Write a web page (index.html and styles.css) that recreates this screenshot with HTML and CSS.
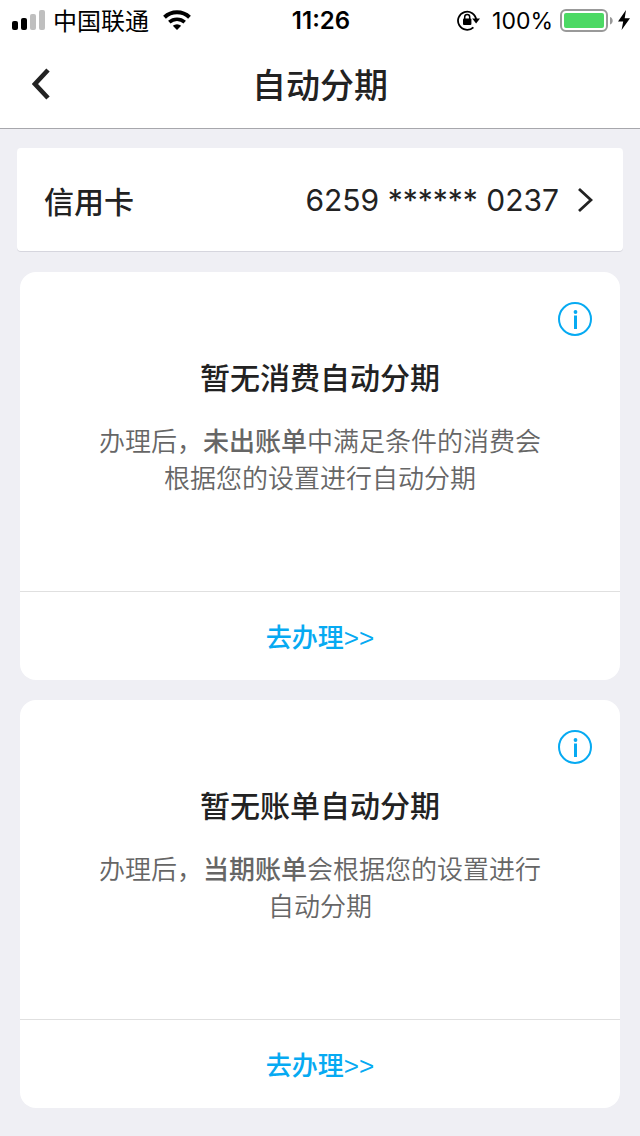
FILE: index.html
```html
<!DOCTYPE html>
<html lang="zh-CN">
<head>
    <meta charset="UTF-8">
    <meta name="viewport" content="width=device-width, initial-scale=1.0">
    <title>自动分期</title>
    <link rel="stylesheet" href="styles.css">
</head>
<body>
    <div class="status-bar">
        <div class="status-left">
            <svg class="signal" width="34" height="20" viewBox="0 0 34 20">
                <rect x="0" y="11" width="6" height="9" rx="2"/>
                <rect x="9" y="8" width="6" height="12" rx="2"/>
                <rect x="18" y="4" width="6" height="16" rx="2" fill="#bfbfbf"/>
                <rect x="27" y="0" width="6" height="20" rx="2" fill="#bfbfbf"/>
            </svg>
            <span class="carrier">中国联通</span>
            <svg class="wifi" width="28" height="20" viewBox="0 0 28 20">
                <path d="M1.5 7.2a18.2 18.2 0 0 1 25 0" fill="none" stroke="#000" stroke-width="4"/>
                <path d="M6.3 12.2a11.4 11.4 0 0 1 15.4 0" fill="none" stroke="#000" stroke-width="3.6"/>
                <path d="M14 20l-4.2-4.2a6.2 6.2 0 0 1 8.4 0z"/>
            </svg>
        </div>
        <span class="time">11:26</span>
        <div class="status-right">
            <svg class="lock" width="24" height="22" viewBox="0 0 24 22">
                <path d="M16.4 18.3A9.1 9.1 0 1 1 19.2 11" fill="none" stroke="#000" stroke-width="1.8"/>
                <path d="M15.2 9.6h7.8l-3.9 4.8z"/>
                <rect x="6" y="9.5" width="8.4" height="6.5" rx="1"/>
                <path d="M7.7 10V8a2.5 2.5 0 0 1 5 0v2" fill="none" stroke="#000" stroke-width="1.5"/>
            </svg>
            <span class="percent">100%</span>
            <svg class="battery" width="54" height="24" viewBox="0 0 54 24">
                <rect x="1" y="2" width="46" height="21" rx="5" fill="none" stroke="#999" stroke-width="2"/>
                <rect x="4" y="5" width="40" height="15" rx="2" fill="#4cd964"/>
                <path d="M50 9c3.6 1 3.6 6.5 0 7.5z" fill="#999"/>
            </svg>
            <svg class="bolt" width="12" height="20" viewBox="0 0 12 20">
                <path d="M8 0L0 11.5h5.2L3.6 20 12 8.3H6.7z"/>
            </svg>
        </div>
    </div>

    <header class="nav-bar">
        <button type="button" class="back" aria-label="返回">
            <svg width="18" height="32" viewBox="0 0 18 32">
                <path d="M16 2L3 16l13 14" fill="none" stroke="#222" stroke-width="4.6"/>
            </svg>
        </button>
        <h1>自动分期</h1>
    </header>

    <main>
        <button type="button" class="card-select">
            <span class="card-label">信用卡</span>
            <span class="card-number">6259 ****** 0237</span>
            <svg width="16" height="26" viewBox="0 0 16 26">
                <path d="M2 2l12 11L2 24" fill="none" stroke="#222" stroke-width="2.8"/>
            </svg>
        </button>

        <section class="plan">
            <div class="plan-body">
                <button type="button" class="info" aria-label="说明">
                    <svg width="34" height="34" viewBox="0 0 34 34">
                        <circle cx="17" cy="17" r="16" fill="none" stroke="#06aaf2" stroke-width="2"/>
                        <circle cx="17.5" cy="10" r="1.9" fill="#06aaf2"/>
                        <rect x="16" y="13.5" width="3" height="13.5" fill="#06aaf2"/>
                    </svg>
                </button>
                <h2>暂无消费自动分期</h2>
                <p>办理后，<strong>未出账单</strong>中满足条件的消费会<br>根据您的设置进行自动分期</p>
            </div>
            <a href="#" class="apply">去办理&gt;&gt;</a>
        </section>

        <section class="plan">
            <div class="plan-body">
                <button type="button" class="info" aria-label="说明">
                    <svg width="34" height="34" viewBox="0 0 34 34">
                        <circle cx="17" cy="17" r="16" fill="none" stroke="#06aaf2" stroke-width="2"/>
                        <circle cx="17.5" cy="10" r="1.9" fill="#06aaf2"/>
                        <rect x="16" y="13.5" width="3" height="13.5" fill="#06aaf2"/>
                    </svg>
                </button>
                <h2>暂无账单自动分期</h2>
                <p>办理后，<strong>当期账单</strong>会根据您的设置进行<br>自动分期</p>
            </div>
            <a href="#" class="apply">去办理&gt;&gt;</a>
        </section>
    </main>
</body>
</html>
```

FILE: styles.css
```css
* {
    box-sizing: border-box;
}
body {
    margin: 0;
    background-color: #efeff4;
    color: #222;
    font-family: Inter, "Noto Sans CJK SC", sans-serif;
}
button {
    padding: 0;
    border: none;
    background: none;
    color: inherit;
    font-family: inherit;
    cursor: pointer;
}
svg {
    display: block;
    flex-shrink: 0;
}
h1, h2, p {
    margin: 0;
}

/* status bar */
.status-bar {
    display: grid;
    grid-template-columns: 1fr auto 1fr;
    align-items: center;
    height: 40px;
    padding: 0 10px 0 12px;
    background-color: #fff;
    color: #000;
    font-size: 24px;
    line-height: 40px;
}
.status-left, .status-right {
    display: flex;
    align-items: center;
}
.status-right {
    justify-content: flex-end;
}
.carrier {
    margin: 0 14px 0 7px;
    padding-top: 3px;
    line-height: 37px;
}
.time {
    padding-top: 2px;
    font-weight: 600;
    line-height: 38px;
}
.percent {
    margin: 0 7px 0 11px;
    padding-top: 2px;
    font-size: 23px;
    line-height: 38px;
}
.bolt {
    margin-left: 4px;
}

/* navigation */
.nav-bar {
    display: grid;
    grid-template-columns: 1fr auto 1fr;
    align-items: center;
    height: 89px;
    padding: 0 32px;
    border-bottom: 1px solid #a7a7ac;
    background-color: #fff;
}
.back {
    justify-self: start;
}
h1 {
    padding-top: 4px;
    font-size: 34px;
    font-weight: 500;
    line-height: 48px;
}

main {
    padding: 19px 20px 28px;
}
.card-select {
    display: flex;
    align-items: center;
    width: calc(100% + 6px);
    height: 103px;
    margin: 0 -3px 21px;
    padding: 0 30px 0 27px;
    border-radius: 4px;
    background-color: #fff;
    box-shadow: 0 1px 0 #d6d6de;
    font-size: 30px;
}
.card-label {
    font-weight: 500;
}
.card-number {
    margin: 0 18px 0 auto;
    font-weight: 400;
}

/* instalment cards */
.plan {
    margin-bottom: 20px;
    border-radius: 16px;
    background-color: #fff;
    text-align: center;
}
.plan:last-child {
    margin-bottom: 0;
}
.plan-body {
    min-height: 320px;
    padding: 30px 28px;
    border-bottom: 1px solid #e0e0e0;
}
.info {
    display: block;
    margin-left: auto;
}
h2 {
    margin-top: 20px;
    font-size: 30px;
    font-weight: 500;
    line-height: 44px;
}
.plan p {
    margin-top: 23px;
    color: #666;
    font-size: 26px;
    font-weight: 350;
    line-height: 37px;
}
.plan strong {
    font-weight: 500;
}
.apply {
    display: block;
    padding-top: 4px;
    color: #06aaf2;
    font-family: "Liberation Sans", "Noto Sans CJK SC", sans-serif;
    font-size: 26px;
    font-weight: 500;
    line-height: 84px;
    text-decoration: none;
}
```
